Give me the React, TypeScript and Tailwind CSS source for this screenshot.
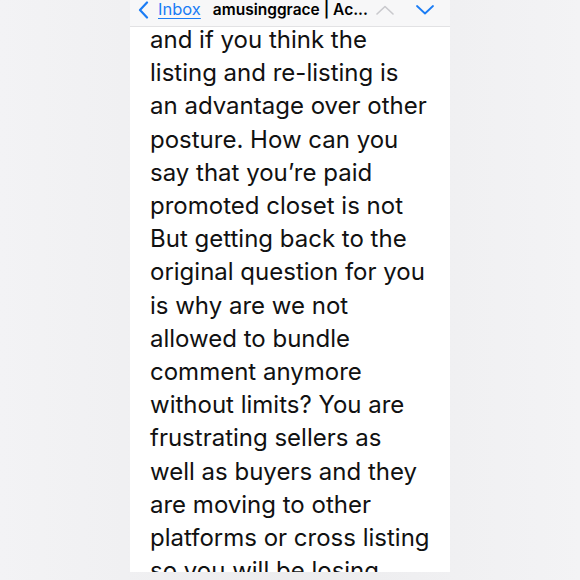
import React from "react";

const lines = [
  "and if you think the",
  "listing and re-listing is",
  "an advantage over other",
  "posture. How can you",
  "say that you’re paid",
  "promoted closet is not",
  "But getting back to the",
  "original question for you",
  "is why are we not",
  "allowed to bundle",
  "comment anymore",
  "without limits? You are",
  "frustrating sellers as",
  "well as buyers and they",
  "are moving to other",
  "platforms or cross listing",
  "so you will be losing",
];

const App = () => {
  return (
    <div
      className="h-[580px] w-[580px] overflow-hidden flex justify-center bg-gradient-to-r from-[#f3f3f5] via-[#ececee] to-[#f3f3f5]"
      style={{ fontFamily: "Inter, 'Liberation Sans', sans-serif" }}
    >
      <div className="w-[320px] flex flex-col h-[572px]">
        <div className="h-[27px] shrink-0 bg-[#f7f7f8] border-b border-[#e2e2e4] flex items-center pb-[7px] pl-[8px] pr-[16px]">
          <svg width="11" height="18" viewBox="0 0 11 18" className="shrink-0">
            <path d="M9 1.5 L2 9 L9 16.5" fill="none" stroke="#1a7cf5" strokeWidth="2.2" strokeLinecap="round" strokeLinejoin="round" />
          </svg>
          <span className="ml-[9px] text-[16.5px] leading-none text-[#1a7cf5] underline underline-offset-[3px] decoration-1">
            Inbox
          </span>
          <span className="ml-[12px] text-[15.5px] leading-none font-semibold text-black whitespace-nowrap">
            amusinggrace | Ac...
          </span>
          <svg width="18" height="10" viewBox="0 0 18 10" className="ml-[8px] shrink-0">
            <path d="M1 9 L9 1.5 L17 9" fill="none" stroke="#c9c9cd" strokeWidth="1.6" strokeLinecap="round" strokeLinejoin="round" />
          </svg>
          <svg width="18" height="10" viewBox="0 0 18 10" className="ml-auto shrink-0">
            <path d="M1 1 L9 8.5 L17 1" fill="none" stroke="#1a7cf5" strokeWidth="1.8" strokeLinecap="round" strokeLinejoin="round" />
          </svg>
        </div>
        <div className="flex-1 bg-white overflow-hidden pl-[20px]">
          <div className="mt-[-4px] text-[24px] leading-[33.2px] text-[#111] whitespace-nowrap">
            {lines.map((l, i) => (
              <div key={i}>{l}</div>
            ))}
          </div>
        </div>
      </div>
    </div>
  );
};

export default App;
